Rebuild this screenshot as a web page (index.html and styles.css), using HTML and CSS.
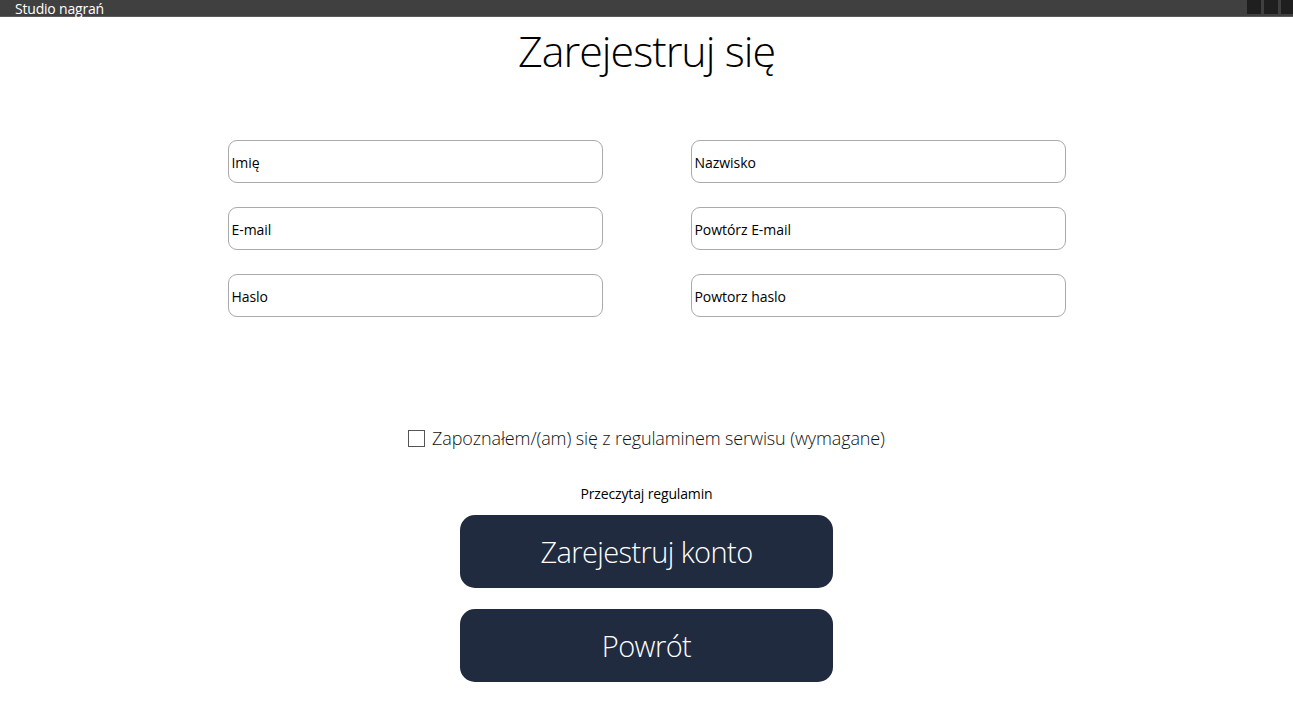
FILE: index.html
```html
<!DOCTYPE html>
<html lang="pl">
<head>
<meta charset="utf-8">
<title>Studio nagrań</title>
<link rel="stylesheet" href="styles.css">
</head>
<body>
<div class="titlebar">
  <span class="app-title">Studio nagrań</span>
  <div class="win-btns">
    <span class="win-btn"></span>
    <span class="win-btn"></span>
    <span class="win-btn"></span>
  </div>
</div>
<main class="page">
  <h1 class="heading">Zarejestruj się</h1>
  <div class="form-grid">
    <div class="field"><span class="placeholder">Imię</span></div>
    <div class="field"><span class="placeholder">Nazwisko</span></div>
    <div class="field"><span class="placeholder">E-mail</span></div>
    <div class="field"><span class="placeholder">Powtórz E-mail</span></div>
    <div class="field"><span class="placeholder">Haslo</span></div>
    <div class="field"><span class="placeholder">Powtorz haslo</span></div>
  </div>
  <label class="terms">
    <span class="checkbox"></span>
    <span class="terms-text">Zapoznałem/(am) się z regulaminem serwisu (wymagane)</span>
  </label>
  <div class="read-terms">Przeczytaj regulamin</div>
  <div class="actions">
    <button class="btn">Zarejestruj konto</button>
    <button class="btn">Powrót</button>
  </div>
</main>
</body>
</html>
```

FILE: styles.css
```css
* { box-sizing: border-box; }
html, body { margin: 0; padding: 0; background: #ffffff; }
body {
  font-family: "Open Sans", "Noto Sans", sans-serif;
  color: #000;
  width: 1293px;
  height: 726px;
  overflow: hidden;
}
.titlebar {
  height: 17px;
  background: #404040;
  border-bottom: 1px solid #5a5a5a;
  display: flex;
  align-items: flex-start;
  justify-content: space-between;
}
.app-title {
  color: #ffffff;
  font-size: 14px;
  line-height: 17px;
  padding-left: 15px;
  letter-spacing: -0.2px;
}
.win-btns {
  display: flex;
  gap: 3px;
}
.win-btn {
  width: 14px;
  height: 14px;
  background: #1f1f1f;
}
.win-btn:last-child { width: 12px; }
.page {
  display: flex;
  flex-direction: column;
  align-items: center;
}
.heading {
  margin: 4px 0 0;
  font-weight: 300;
  font-size: 43px;
  line-height: 60px;
  letter-spacing: -1px;
  height: 60px;
}
.form-grid {
  margin-top: 59px;
  display: grid;
  grid-template-columns: 375px 375px;
  column-gap: 88px;
  row-gap: 24px;
}
.field {
  height: 43px;
  border: 1px solid #a9a9b0;
  border-radius: 9px;
  display: flex;
  align-items: center;
  padding-left: 3px;
  padding-top: 2px;
}
.placeholder {
  font-size: 14px;
  letter-spacing: -0.05px;
}
.terms {
  margin-top: 111px;
  display: flex;
  align-items: center;
  gap: 7px;
  height: 20px;
}
.checkbox {
  width: 17px;
  height: 17px;
  border: 1px solid #555;
  background: #fff;
}
.terms-text {
  font-weight: 300;
  font-size: 18px;
  letter-spacing: -0.12px;
  color: #111;
}
.read-terms {
  margin-top: 36px;
  font-size: 14px;
  letter-spacing: -0.15px;
}
.actions {
  margin-top: 12px;
  display: flex;
  flex-direction: column;
  gap: 21px;
}
.btn {
  width: 373px;
  height: 73px;
  border: none;
  border-radius: 15px;
  background: #212b3f;
  color: #ffffff;
  font-family: "Open Sans", "Noto Sans", sans-serif;
  font-weight: 300;
  font-size: 29px;
  letter-spacing: -0.6px;
  padding: 0;
}
```
